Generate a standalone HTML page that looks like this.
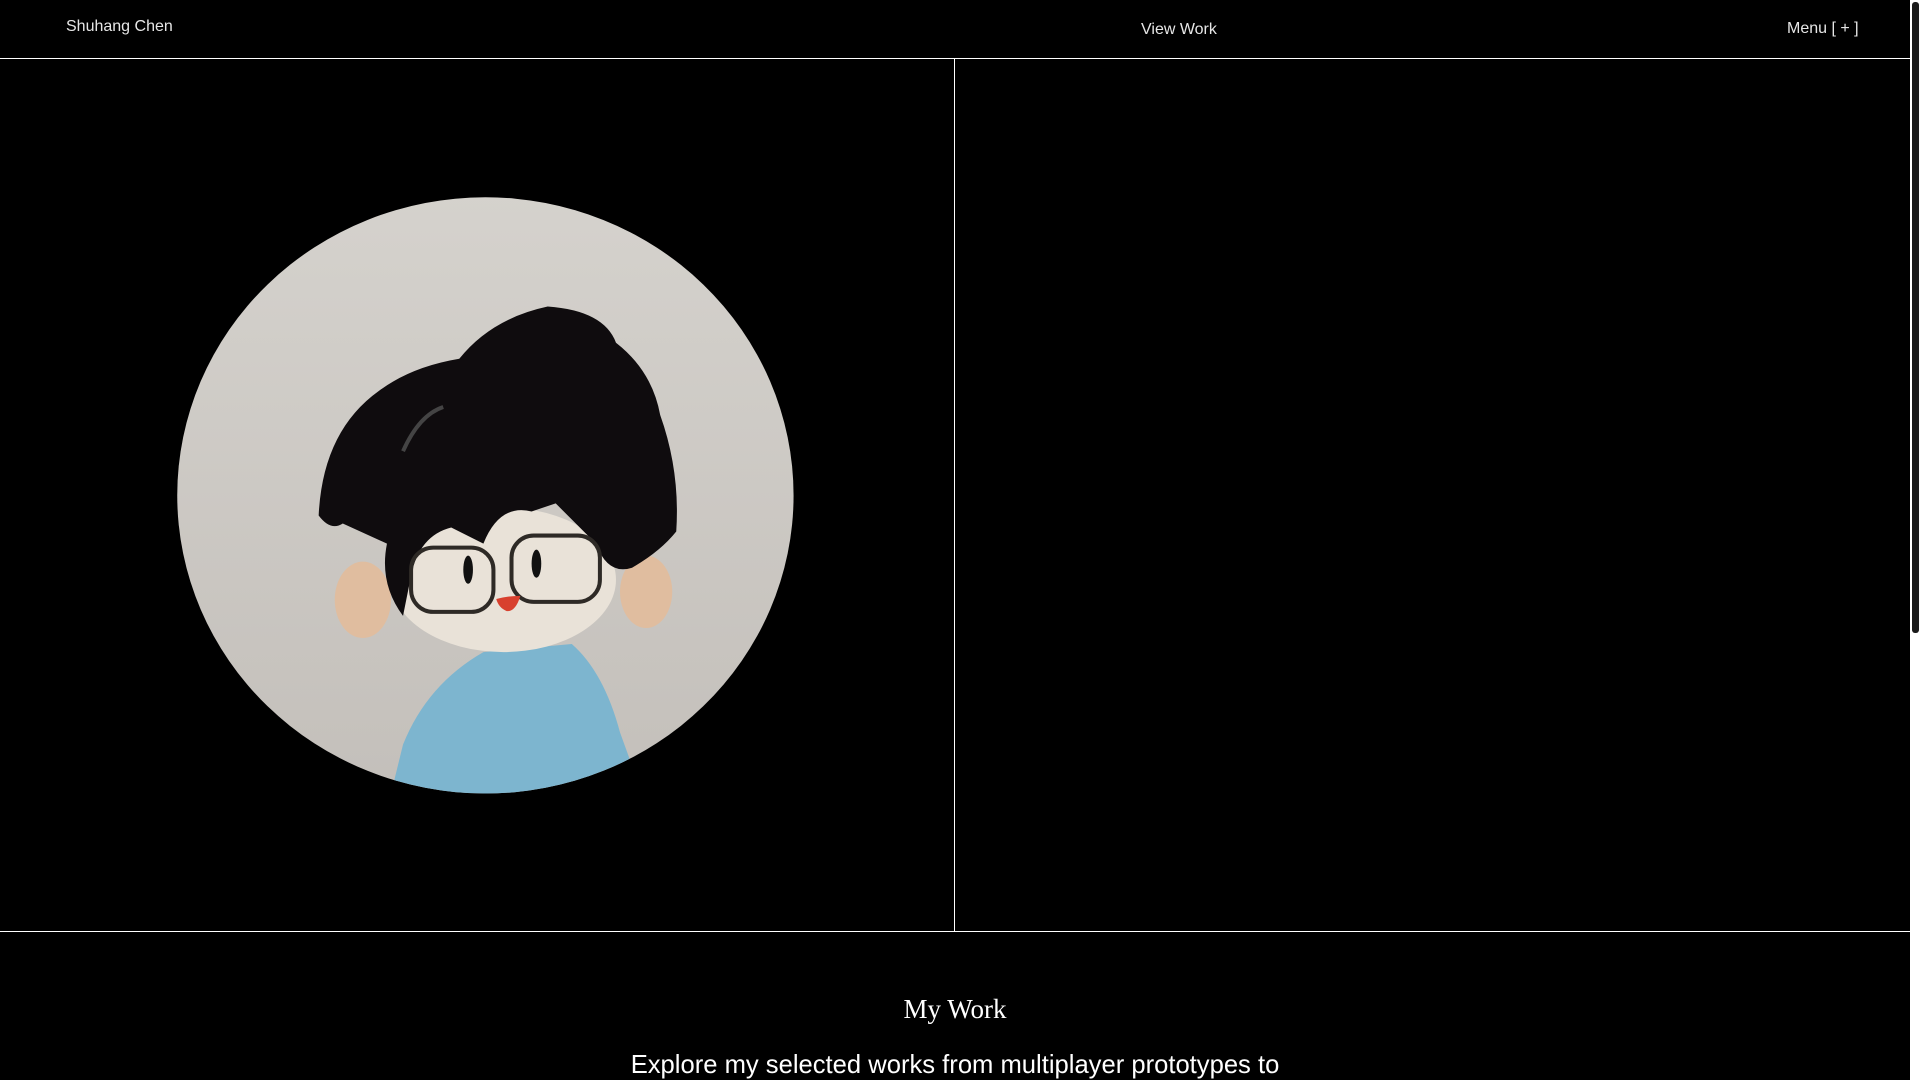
<!DOCTYPE html>
<html><head><meta charset="utf-8"><style>
*{margin:0;padding:0;box-sizing:border-box}
html,body{width:1920px;height:1080px;overflow:hidden;background:#000;font-family:"Liberation Sans",sans-serif;color:#fff}
.t{position:absolute;white-space:nowrap;line-height:1}
.sb{position:absolute;left:1910px;top:0;width:10px;height:1080px;background:#fff}
.th{position:absolute;left:1912px;top:2px;width:7px;height:631px;background:#1a1a1a;border-radius:3px}
</style></head><body>
<div class="t" style="left:66px;top:19px;font-size:16px;color:#e6e6e6">Shuhang Chen</div>
<div class="t" style="left:1141px;top:22px;font-size:16px;color:#e6e6e6">View Work</div>
<div class="t" style="left:1787px;top:21px;font-size:16px;color:#e6e6e6">Menu [ + ]</div>
<div style="position:absolute;left:0;top:58px;width:1910px;height:1px;background:#fff"></div>
<div style="position:absolute;left:954px;top:58px;width:1px;height:873px;background:#fff"></div>
<div style="position:absolute;left:0;top:931px;width:1910px;height:1px;background:#fff"></div>
<svg style="position:absolute;left:170px;top:190px" width="630" height="620" viewBox="0 0 1568 1543">
<defs>
<linearGradient id="bg" x1="0" y1="0" x2="0" y2="1"><stop offset="0" stop-color="#d5d2cd"/><stop offset="1" stop-color="#c3bfba"/></linearGradient>
<clipPath id="c"><ellipse cx="785" cy="760" rx="767" ry="742"/></clipPath>
</defs>
<g clip-path="url(#c)">
<rect width="1568" height="1543" fill="url(#bg)"/>
<path d="M540 1543 L580 1380 Q640 1230 780 1150 L1000 1130 Q1080 1200 1120 1350 L1190 1543 Z" fill="#7db5cf"/>
<ellipse cx="480" cy="1020" rx="70" ry="95" fill="#e0bd9f"/>
<ellipse cx="1185" cy="1000" rx="65" ry="90" fill="#e0bd9f"/>
<ellipse cx="830" cy="970" rx="280" ry="180" fill="#e9e2d8"/>
<path d="M370 810 Q380 600 520 500 Q600 440 720 420 Q800 320 940 290 Q1080 300 1110 380 Q1200 450 1220 560 Q1270 700 1260 850 Q1220 900 1150 940 Q1090 960 1060 880 Q1000 820 960 780 L900 800 Q820 780 780 880 L700 840 Q620 860 600 960 L580 1060 Q520 980 540 880 L430 830 Q400 850 370 810 Z" fill="#0f0c0e"/>
<path d="M580 650 Q620 560 680 540" stroke="#444" stroke-width="10" fill="none"/>
<rect x="600" y="890" width="205" height="160" rx="55" fill="none" stroke="#2e2a26" stroke-width="10"/>
<rect x="850" y="860" width="220" height="165" rx="55" fill="none" stroke="#2e2a26" stroke-width="10"/>
<ellipse cx="742" cy="945" rx="12" ry="35" fill="#111"/>
<ellipse cx="912" cy="930" rx="12" ry="35" fill="#111"/>
<path d="M812 1018 Q840 1010 872 1010 Q860 1050 838 1048 Q818 1040 812 1018 Z" fill="#d8402e"/>
</g>
</svg>
<div class="t" style="left:0;width:1910px;text-align:center;top:996px;font-family:'Liberation Serif',serif;font-size:27px">My Work</div>
<div class="t" style="left:0;width:1910px;text-align:center;top:1053px;font-size:25.6px">Explore my selected works from multiplayer prototypes to</div>
<div class="sb"></div><div class="th"></div>
</body></html>
